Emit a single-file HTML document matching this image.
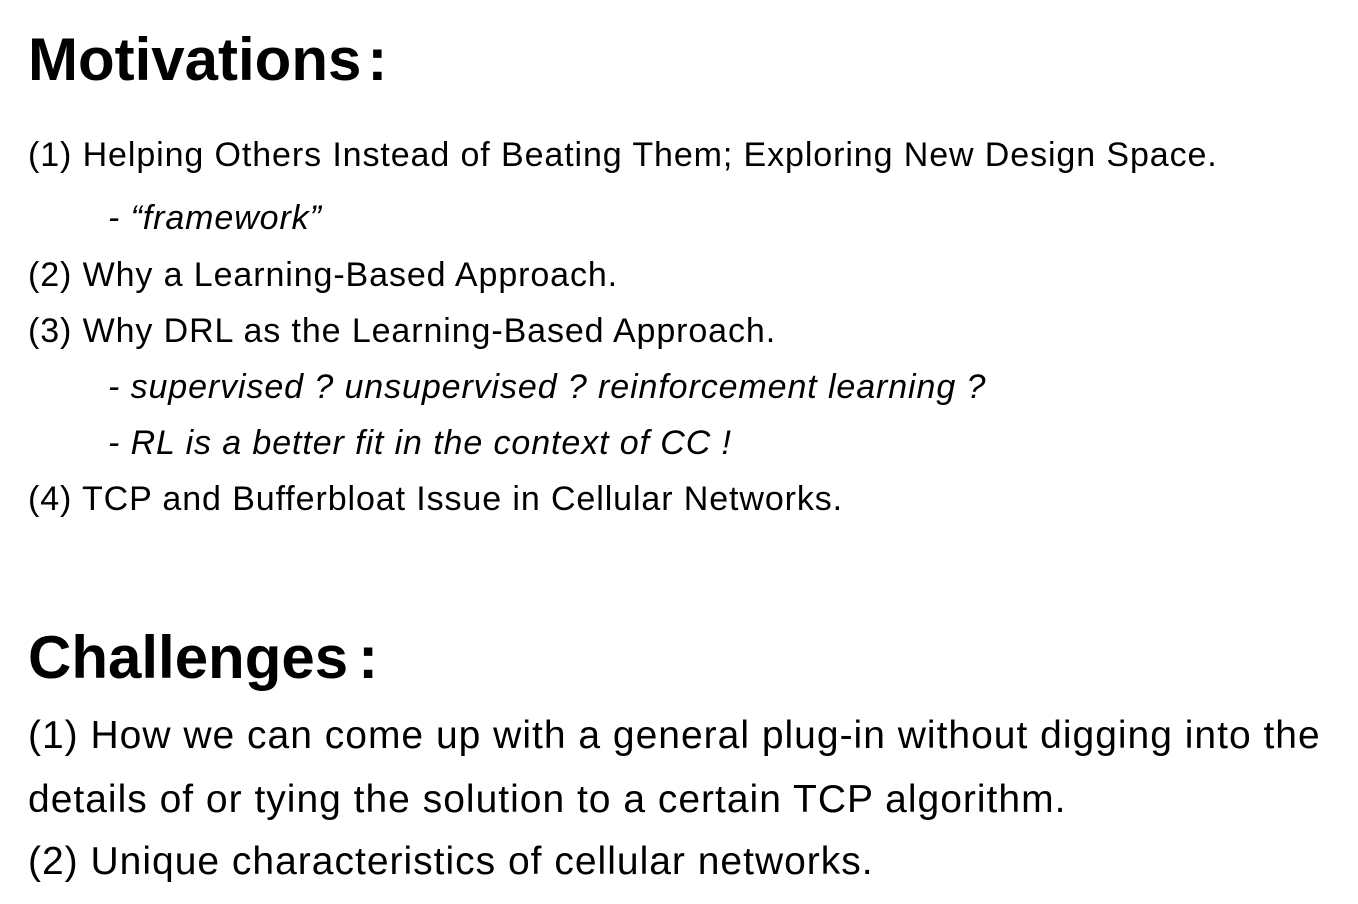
<!DOCTYPE html>
<html><head><meta charset="utf-8"><style>
body{margin:0;width:1358px;height:904px;background:#fff;position:relative;overflow:hidden;font-family:"Liberation Sans",sans-serif;color:#000}
div{position:absolute;white-space:nowrap}
.h{font-weight:bold;font-size:60px;line-height:60px;left:28px}
.t{font-size:34px;line-height:34px;left:28px;letter-spacing:0.9px}
.i{font-style:italic;left:108px}
.c{font-size:39px;line-height:38px;left:28px;letter-spacing:1px}
</style></head><body>
<div class="h" style="top:30px">Motivations<span style="margin-left:6px">:</span></div>
<div class="t" style="top:138px">(1) Helping Others Instead of Beating Them; Exploring New Design Space.</div>
<div class="t i" style="top:201px">- “framework”</div>
<div class="t" style="top:258px">(2) Why a Learning-Based Approach.</div>
<div class="t" style="top:314px">(3) Why DRL as the Learning-Based Approach.</div>
<div class="t i" style="top:370px">- supervised ? unsupervised ? reinforcement learning ?</div>
<div class="t i" style="top:426px">- RL is a better fit in the context of CC !</div>
<div class="t" style="top:482px">(4) TCP and Bufferbloat Issue in Cellular Networks.</div>
<div class="h" style="top:628px">Challenges<span style="margin-left:10px">:</span></div>
<div class="c" style="top:717px">(1) How we can come up with a general plug-in without digging into the</div>
<div class="c" style="top:781px">details of or tying the solution to a certain TCP algorithm.</div>
<div class="c" style="top:843px">(2) Unique characteristics of cellular networks.</div>
</body></html>
